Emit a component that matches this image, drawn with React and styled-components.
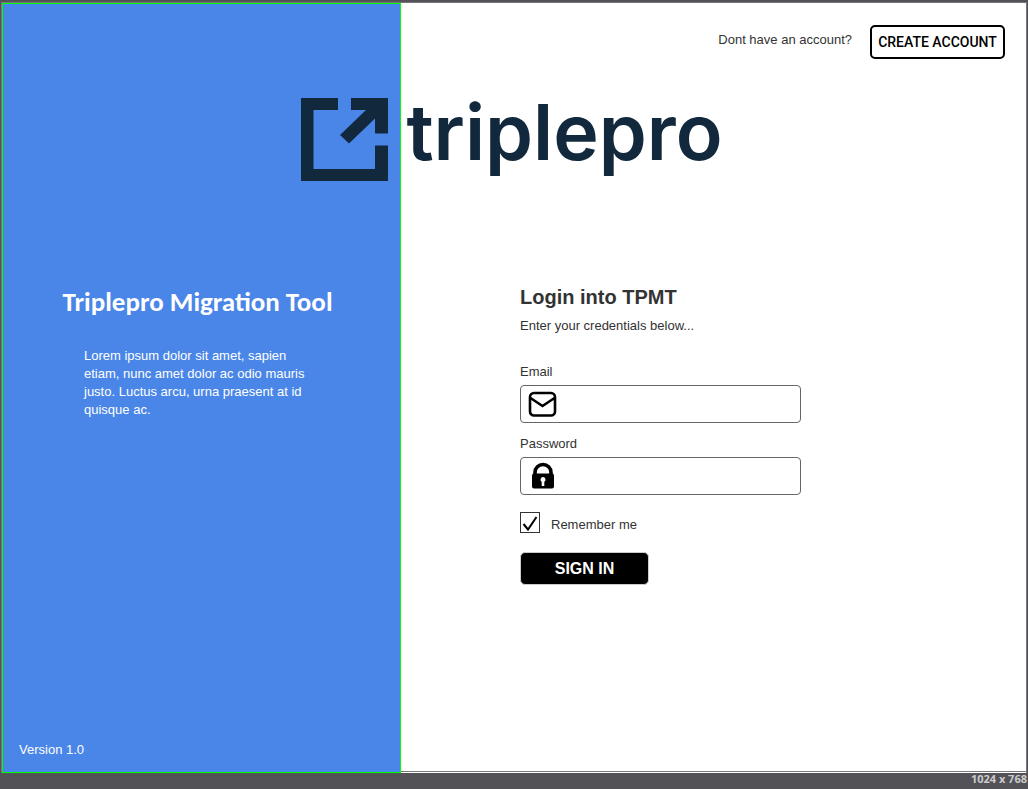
import React from "react";
import styled, { createGlobalStyle } from "styled-components";

const ink = "#12283d";
const sans = '"Liberation Sans", Arial, sans-serif';

const GlobalStyle = createGlobalStyle`
  *, *::before, *::after { box-sizing: border-box; }
  body { margin: 0; background: #535257; }
  h1, h2, p { margin: 0; }
`;

const Page = styled.div`
  display: flex;
  flex-direction: column;
  min-height: 100vh;
  padding: 2px 1px 0;
  background: #535257;
  color: #333;
  font: 13px/18px ${sans};
`;

const Stage = styled.main`
  position: relative;
  flex: 1;
  display: grid;
  grid-template-columns: minmax(0, 399fr) minmax(0, 625fr);
  border: 1px solid #77767a;
  border-bottom: 0;
`;

const Brand = styled.div`
  position: absolute;
  top: 89px;
  left: 0;
  right: 0;
  display: flex;
  justify-content: center;
  gap: 18px;
  padding-right: 4px;
  color: ${ink};
  pointer-events: none;
`;

const BrandMark = styled.svg`
  flex: none;
  width: 87px;
  height: 83px;
  margin-top: 6px;
`;

const Wordmark = styled.span`
  font: 600 77px/80px Inter, sans-serif;
`;

const Sidebar = styled.aside`
  display: flex;
  flex-direction: column;
  padding: 282px 16px 13px;
  border: 1px solid #00ff00;
  background: #4a86e8;
  color: #fff;
`;

const ProductName = styled.h1`
  padding-right: 8px;
  font: 700 27px/32px Carlito, Lato, sans-serif;
  text-align: center;
`;

const Blurb = styled.p`
  width: 228px;
  margin: 29px 0 0 65px;
`;

const Version = styled.p`
  margin-top: auto;
`;

const Content = styled.section`
  display: flex;
  flex-direction: column;
  border-bottom: 1px solid #fff;
  background: #fff;
  box-shadow: inset 0 -1px 0 #77767a;
`;

const TopBar = styled.header`
  display: flex;
  justify-content: flex-end;
  gap: 18px;
  padding: 22px 21px 0;
`;

const Prompt = styled.span`
  margin-top: 6px;
`;

const CreateButton = styled.button`
  width: 135px;
  height: 34px;
  padding: 0;
  border: 2px solid #000;
  border-radius: 5px;
  background: #fff;
  color: #000;
  font: 500 14px/18px Roboto, sans-serif;
`;

const Form = styled.form`
  display: flex;
  flex-direction: column;
  width: 281px;
  margin: 226px 0 0 119px;
`;

const Heading = styled.h2`
  font: 700 20px/24px ${sans};
`;

const Hint = styled.p`
  margin: 8px 0 28px;
`;

const Field = styled.div`
  display: flex;
  flex-direction: column;
  gap: 4px;
  margin-bottom: 12px;
`;

const Label = styled.label`
  line-height: 18px;
`;

const InputBox = styled.div`
  display: flex;
  align-items: center;
  height: 38px;
  padding-left: 7px;
  border: 1px solid #666;
  border-radius: 4px;
  background: #fff;
`;

const FieldIcon = styled.svg`
  flex: none;
  width: 30px;
  height: 30px;
`;

const TextInput = styled.input`
  flex: 1;
  min-width: 0;
  height: 100%;
  padding: 0 8px;
  border: 0;
  outline: 0;
  background: transparent;
  color: inherit;
  font: inherit;
`;

const Remember = styled.div`
  display: flex;
  align-items: flex-start;
  gap: 11px;
  margin: 5px 0 18px;

  ${Label} {
    padding-top: 4px;
  }
`;

const Tick = styled.input`
  appearance: none;
  width: 20px;
  height: 21px;
  margin: 0;
  border: 1px solid #333;
  background: #fff;
  &:checked {
    background: #fff
      url("data:image/svg+xml,%3Csvg xmlns='http://www.w3.org/2000/svg' viewBox='0 0 18 18'%3E%3Cpath d='M2.500 10l4.500 5.500L15.500 3' fill='none' stroke='black' stroke-width='2'/%3E%3C/svg%3E")
      center / 18px 18px no-repeat;
  }
`;

const SignIn = styled.button`
  width: 129px;
  height: 33px;
  padding: 0;
  border: 1px solid #ccc;
  border-radius: 5px;
  background: #000;
  color: #fff;
  font: 700 16px/20px ${sans};
`;

const StatusBar = styled.footer`
  height: 16px;
  color: #ccc;
  font: 700 11px/12px "Open Sans", sans-serif;
  text-align: right;
`;

export default function App() {
  return (
    <>
      <GlobalStyle />
      <Page>
        <Stage>
          <Sidebar>
            <ProductName>Triplepro Migration Tool</ProductName>
            <Blurb>
              Lorem ipsum dolor sit amet, sapien etiam, nunc amet dolor ac odio
              mauris justo. Luctus arcu, urna praesent at id quisque ac.
            </Blurb>
            <Version>Version 1.0</Version>
          </Sidebar>
          <Content>
            <TopBar>
              <Prompt>Dont have an account?</Prompt>
              <CreateButton type="button">CREATE ACCOUNT</CreateButton>
            </TopBar>
            <Form onSubmit={(e) => e.preventDefault()}>
              <Heading>Login into TPMT</Heading>
              <Hint>Enter your credentials below...</Hint>
              <Field>
                <Label htmlFor="email">Email</Label>
                <InputBox>
                  <FieldIcon viewBox="0 0 30 30" fill="none" stroke="#000" strokeWidth="2.600" aria-hidden="true">
                    <rect x="2" y="4" width="25" height="22.500" rx="4" />
                    <path d="M2.500 9L14.500 17L26.500 9" />
                  </FieldIcon>
                  <TextInput id="email" type="email" />
                </InputBox>
              </Field>
              <Field>
                <Label htmlFor="password">Password</Label>
                <InputBox>
                  <FieldIcon viewBox="0 0 30 30" aria-hidden="true">
                    <path d="M7 14V11.500a8 8 0 0 1 16 0V14" fill="none" stroke="#000" strokeWidth="3.600" />
                    <rect x="4" y="12.500" width="22" height="15" rx="2" />
                    <path d="M15 16a2.600 2.600 0 0 1 1.300 4.800V25h-2.600v-4.200a2.600 2.600 0 0 1 1.300-4.800z" fill="#fff" />
                  </FieldIcon>
                  <TextInput id="password" type="password" />
                </InputBox>
              </Field>
              <Remember>
                <Tick id="remember" type="checkbox" defaultChecked />
                <Label htmlFor="remember">Remember me</Label>
              </Remember>
              <SignIn type="submit">SIGN IN</SignIn>
            </Form>
          </Content>
          <Brand>
            <BrandMark viewBox="0 0 87 83" fill="currentColor" aria-hidden="true">
              <path d="M0 0H37V12H12.500V71H74V47.500H87V83H0Z" />
              <path d="M50 0H87V35.500H74V20.500L48 45.500L39 37L65 12H50Z" />
            </BrandMark>
            <Wordmark>triplepro</Wordmark>
          </Brand>
        </Stage>
        <StatusBar>1024 x 768</StatusBar>
      </Page>
    </>
  );
}
